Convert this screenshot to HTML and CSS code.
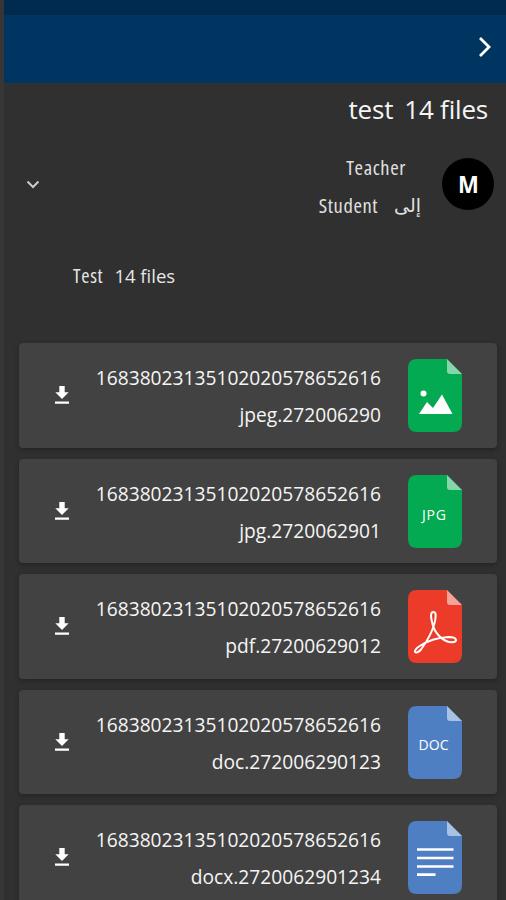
FILE: index.html
```html
<!DOCTYPE html>
<html lang="ar">
<head>
<meta charset="utf-8">
<title>test 14 files</title>
<link rel="stylesheet" href="styles.css">
</head>
<body>
<svg width="0" height="0" class="defs">
  <symbol id="page" viewBox="0 0 56 74">
    <path d="M10 0H40L55 15V64Q55 73 46 73H10Q1 73 1 64V9Q1 0 10 0Z" fill="currentColor"/>
    <path d="M40 0L55 15H43Q40 15 40 12Z" fill="#fff" fill-opacity=".52"/>
  </symbol>
  <symbol id="download" viewBox="0 0 14 18">
    <path d="M4.3 0H9.7V6.3H13.7L7 13L.3 6.3H4.3ZM0 15.4H14V17.7H0Z" fill="#fff"/>
  </symbol>
</svg>
<div class="screen">
  <div class="status"></div>
  <header class="bar">
    <svg width="14" height="22" viewBox="0 0 14 22"><path d="M2 2L11 11L2 20" fill="none" stroke="#fff" stroke-width="2.8"/></svg>
  </header>
  <h1 class="title"><span>test</span><span>14 files</span></h1>
  <section class="sender">
    <svg class="expand" width="14" height="9" viewBox="0 0 14 9"><path d="M1.5 1.5L7 7L12.5 1.5" fill="none" stroke="#ccc" stroke-width="2"/></svg>
    <div class="names">
      <div class="teacher"><span class="narrow">Teacher</span></div>
      <div class="student"><span class="narrow">Student</span><span class="to">إلى</span></div>
    </div>
    <div class="avatar"><span class="initial">M</span></div>
  </section>
  <p class="message"><span class="narrow">Test</span><span class="count">14 files</span></p>
  <main class="files">
    <article class="card">
      <svg class="download"><use href="#download"/></svg>
      <div class="name"><div>16838023135102020578652616</div><div><span class="ext">jpeg</span>.272006290</div></div>
      <svg class="icon green" viewBox="0 0 56 74"><use href="#page"/><circle cx="16.500" cy="34.500" r="3" fill="#fff"/><path d="M12 55L20 43L26 49L35 35.500L45.500 55Z" fill="#fff"/></svg>
    </article>
    <article class="card">
      <svg class="download"><use href="#download"/></svg>
      <div class="name"><div>16838023135102020578652616</div><div><span class="ext">jpg</span>.2720062901</div></div>
      <svg class="icon green" viewBox="0 0 56 74"><use href="#page"/><text x="27" y="44.500" textLength="24">JPG</text></svg>
    </article>
    <article class="card">
      <svg class="download"><use href="#download"/></svg>
      <div class="name"><div>16838023135102020578652616</div><div><span class="ext">pdf</span>.27200629012</div></div>
      <svg class="icon red" viewBox="0 0 56 74"><use href="#page"/><path d="M26.300 22C23 22 23.800 28 25.500 34C27.500 43 36 52 45 52.300C51.500 52 50 47 42 47C31 47.500 20 51 12 56.500C4.500 61.500 8.500 65.500 14 59.500C20 52 27.500 38 28.500 28C29 23 28.300 22 26.300 22Z" fill="none" stroke="#fff" stroke-width="2"/></svg>
    </article>
    <article class="card">
      <svg class="download"><use href="#download"/></svg>
      <div class="name"><div>16838023135102020578652616</div><div><span class="ext">doc</span>.272006290123</div></div>
      <svg class="icon blue" viewBox="0 0 56 74"><use href="#page"/><text x="26.500" y="44" textLength="30">DOC</text></svg>
    </article>
    <article class="card">
      <svg class="download"><use href="#download"/></svg>
      <div class="name"><div>16838023135102020578652616</div><div><span class="ext">docx</span>.2720062901234</div></div>
      <svg class="icon blue" viewBox="0 0 56 74"><use href="#page"/><path d="M10 28.500H46.500M10 37H46.500M10 45.500H46.500M10 53.700H28.500" stroke="#fff" stroke-width="2.700"/></svg>
    </article>
  </main>
</div>
</body>
</html>
```
FILE: styles.css
```css
* { box-sizing: border-box; }
body { margin: 0; background: #303030; color: #f5f5f5; font-family: "Open Sans", "Noto Sans", sans-serif; }
.defs { display: block; position: absolute; }
.screen { height: 900px; overflow: hidden; border-left: 4px solid #363636; }
.status { height: 14.5px; background: #002b4e; }
.bar { height: 68.5px; background: #003461; display: flex; justify-content: flex-end; align-items: center; padding: 0 14px 4px 0; }
.title { margin: 0; height: 55px; padding-right: 18px; display: flex; justify-content: flex-end; gap: 11px; font-size: 26px; font-weight: 500; line-height: 53px; letter-spacing: -.2px; white-space: nowrap; }
.sender { height: 100px; padding: 10px 12px 0 22px; display: flex; }
.expand { margin-top: 32px; }
.names { flex: 1; line-height: 38px; font-size: 20.5px; color: #e0e0e0; font-weight: 500; }
.teacher { display: flex; justify-content: flex-end; padding-right: 36px; }
.student { display: flex; justify-content: flex-end; padding-right: 21px; gap: 16px; }
.narrow { font-stretch: 75%; letter-spacing: .6px; }
.to { font-family: "DejaVu Sans", sans-serif; font-size: 19px; font-weight: 400; }
.avatar { width: 52px; height: 52px; margin-top: 10px; border-radius: 50%; background: #000; color: #fff; font-size: 24px; font-weight: 700; line-height: 52px; text-align: center; }
.initial { display: inline-block; transform: scaleX(.92); }
.message { margin: 0; height: 105px; padding: 19px 0 0 69px; display: flex; gap: 11px; font-size: 20px; line-height: 38px; color: #e6e6e6; font-weight: 500; white-space: nowrap; }
.message .narrow { letter-spacing: .7px; }
.count { font-size: 18.5px; }
.files { display: flex; flex-direction: column; gap: 11px; padding: 0 9px 0 15px; }
.card { height: 104.5px; flex: none; display: flex; padding: 16px 34px 0 36px; background: #424242; border-radius: 4px; box-shadow: 0 2px 4px #1c1c1c99; }
.download { width: 14px; height: 18px; margin-top: 27px; }
.name { flex: 1; text-align: right; font-size: 19.2px; line-height: 37px; white-space: nowrap; }
.ext { font-stretch: 93%; }
.icon { width: 56px; height: 74px; margin-left: 26px; }
.icon text { fill: #fff; font-size: 14px; font-stretch: 88%; text-anchor: middle; }
.green { color: #04aa51; }
.red { color: #ed3b2a; }
.blue { color: #4f7fc3; }
```
